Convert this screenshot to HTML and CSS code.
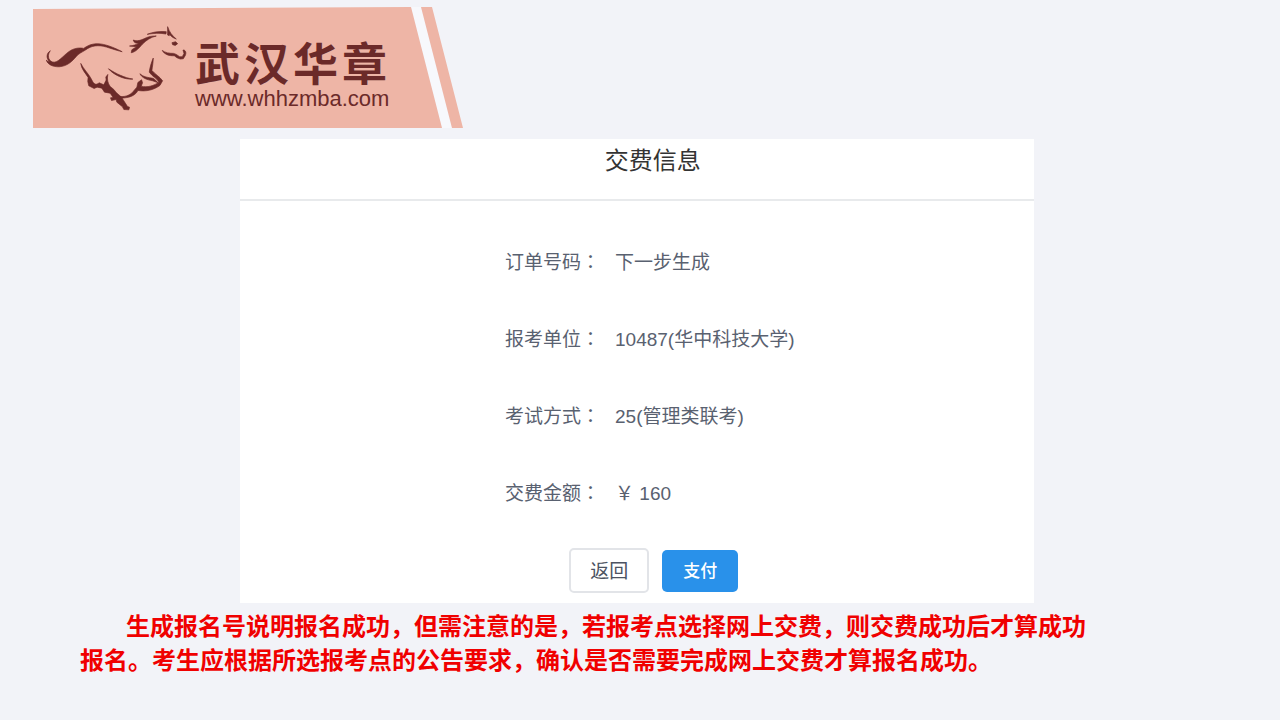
FILE: index.html
```html
<!DOCTYPE html>
<html lang="zh-CN">
<head>
<meta charset="utf-8">
<meta name="viewport" content="width=device-width, initial-scale=1">
<title>交费信息</title>
<link rel="stylesheet" href="styles.css">
</head>
<body>
<header class="brand">
  <svg class="brand-shape" viewBox="0 0 430 121" aria-hidden="true">
    <path fill="#f7f8fc" d="M378 0h10l31 121h-10z"/>
    <path fill="#eeb5a6" d="M0 2 378 0l31 121H0zM388 0h11l31 121h-11z"/>
  </svg>
  <div class="brand-content">
    <svg class="horse" viewBox="45 75 425 260" aria-hidden="true">
      <g fill="#6b2a29" stroke="#6b2a29" stroke-width="2" stroke-linejoin="round">
        <path d="M61 152C47 161 49 177 60 186C50 183 49 180 49 180C52 193 69 201 88 200C112 198 126 184 138 170C146 160 155 157 166 150C184 136 205 134 229 141C248 147 262 152 276 155C253 143 224 131 202 131C183 131 170 138 161 145C145 142 130 145 116 155C97 169 84 189 68 186C53 181 52 163 61 152Z"/>
        <path d="M152 190C161 207 173 219 181 232L188 245C193 253 199 255 207 248L221 254L228 240L227 231L233 223C230 238 233 249 240 259L251 268L258 277L274 291L292 319L298 321L296 329L281 328L277 320L260 306L258 298L244 301L241 293L249 292L240 279L223 276L215 264L201 261L192 265L176 257L173 244L174 232C166 219 154 207 152 190Z"/>
        <path d="M235 206C257 221 284 233 308 237C283 239 251 225 235 206Z"/>
        <path d="M269 289C288 291 302 283 309 274L320 261L323 247L334 239L337 248L333 258C351 263 371 257 386 246C379 233 365 229 357 216C359 202 363 188 369 174C369 187 366 202 365 211C375 223 387 228 397 242L389 256C371 269 349 275 323 271C317 284 301 294 269 294Z"/>
        <path d="M329 221C339 231 354 232 370 235L384 248L367 242C350 239 336 234 329 221Z"/>
        <path d="M303 158L305 149L319 140L298 138C308 137 319 134 327 129C318 131 311 128 309 120C326 127 341 115 354 111C362 108 371 108 378 108C360 112 348 121 337 132C328 142 317 156 303 158Z"/>
        <path d="M351 103C367 96 386 93 408 95L407 102C387 98 369 100 351 103Z"/>
        <path d="M412 105L412 80C417 96 426 107 438 117C427 113 420 108 418 101L417 107Z"/>
        <path d="M425 128L436 125L442 131L435 136L427 134Z"/>
        <path d="M396 151C404 158 418 160 430 160L438 163L448 170L456 170L461 160L458 150C465 149 469 157 465 166L459 176L450 177L440 173L432 167C417 168 402 163 396 151Z"/>
      </g>
    </svg>
    <div class="brand-words">
      <div class="brand-name"><span>武</span><span>汉</span><span>华</span><span>章</span></div>
      <div class="brand-site">www.whhzmba.com</div>
    </div>
  </div>
</header>

<main>
  <section class="card">
    <h1 class="card-title">交费信息</h1>
    <dl class="details">
      <div class="row"><dt>订单号码<span class="colon" lang="zh-TW">：</span></dt><dd>下一步生成</dd></div>
      <div class="row"><dt>报考单位<span class="colon" lang="zh-TW">：</span></dt><dd>10487(华中科技大学)</dd></div>
      <div class="row"><dt>考试方式<span class="colon" lang="zh-TW">：</span></dt><dd>25(管理类联考)</dd></div>
      <div class="row"><dt>交费金额<span class="colon" lang="zh-TW">：</span></dt><dd>￥ 160</dd></div>
    </dl>
    <div class="actions">
      <button class="btn btn-back" type="button">返回</button>
      <button class="btn btn-pay" type="button">支付</button>
    </div>
  </section>
  <p class="note">生成报名号说明报名成功，但需注意的是，若报考点选择网上交费，则交费成功后才算成功报名。考生应根据所选报考点的公告要求，确认是否需要完成网上交费才算报名成功。</p>
</main>
</body>
</html>
```

FILE: styles.css
```css
* {
  box-sizing: border-box;
}

body {
  margin: 0;
  background: #f2f3f8;
  color: #596170;
  font-family: "Liberation Sans", "Noto Sans CJK SC", sans-serif;
}

.brand {
  display: grid;
  width: 430px;
  margin: 7px 0 0 33px;
}

.brand-shape,
.brand-content {
  grid-area: 1 / 1;
}

.brand-shape {
  display: block;
  width: 100%;
}

.brand-content {
  display: flex;
  align-items: flex-start;
  gap: 8px;
  padding: 18px 0 0 12px;
  color: #6b2a29;
}

.horse {
  width: 142px;
}

.brand-words {
  padding-top: 17px;
}

.brand-name {
  display: flex;
  gap: 4px;
  font-size: 45px;
  line-height: 47px;
  font-weight: 700;
}

.brand-site {
  font-size: 22px;
  line-height: 20px;
}

.card {
  width: 62%;
  margin: 11px 0 0 240px;
  background: #fff;
}

.card-title {
  margin: 0;
  padding: 4px 0 20px 32px;
  border-bottom: 2px solid #e8eaec;
  color: #333;
  font-size: 24px;
  line-height: 36px;
  font-weight: 400;
  text-align: center;
}

.details {
  display: grid;
  gap: 49px;
  margin: 0;
  padding: 48px 0 0 265px;
  font-size: 19px;
  line-height: 28px;
}

.row {
  display: flex;
  gap: 15px;
}

.row dd {
  margin: 0;
}

.colon {
  font-family: "Noto Sans CJK TC", sans-serif;
  line-height: 1;
}

.actions {
  display: flex;
  align-items: center;
  justify-content: center;
  gap: 13px;
  padding: 40px 0 10px 34px;
}

.btn {
  padding: 0 0 2px;
  border-radius: 5px;
  font-family: inherit;
}

.btn-back {
  width: 80px;
  height: 45px;
  border: 2px solid #e2e4e8;
  background: #fff;
  color: #4c5362;
  font-size: 19px;
}

.btn-pay {
  width: 76px;
  height: 42px;
  border: 0;
  background: #2991ea;
  color: #fff;
  font-size: 17px;
  font-weight: 500;
}

.note {
  max-width: 1020px;
  margin: 7px 0 0 80px;
  color: #f00000;
  font-size: 24px;
  line-height: 34px;
  font-weight: 700;
  text-indent: 46px;
}
```
